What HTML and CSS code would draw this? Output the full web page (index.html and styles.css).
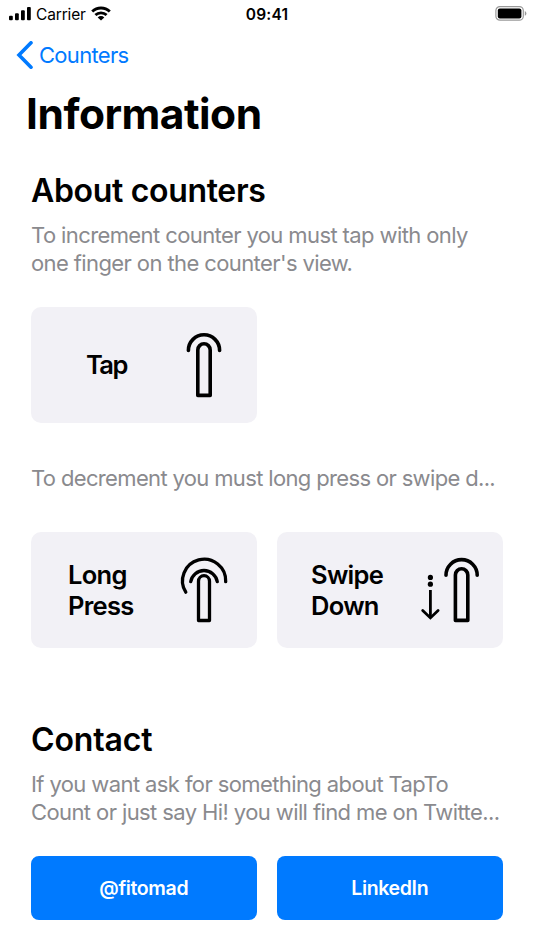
FILE: index.html
```html
<!DOCTYPE html>
<html lang="en">
<head>
    <meta charset="UTF-8">
    <meta name="viewport" content="width=device-width, initial-scale=1.0">
    <title>Information</title>
    <link rel="stylesheet" href="styles.css">
</head>
<body>

    <!-- Status bar -->
    <div class="status-bar">
        <div class="status-left">
            <svg class="signal" width="22" height="14" viewBox="0 0 22 14">
                <rect x="0" y="8.7" width="3.8" height="4.6" rx="1"/>
                <rect x="6" y="6.2" width="3.8" height="7.1" rx="1"/>
                <rect x="12" y="3.2" width="3.8" height="10.1" rx="1"/>
                <rect x="18" y="0" width="3.8" height="13.3" rx="1"/>
            </svg>
            <span class="carrier">Carrier</span>
            <svg class="wifi" width="20" height="15" viewBox="0 0 20 15" fill="none" stroke="#000" stroke-width="2.8">
                <path d="M1.2 5.6 A12.6 12.6 0 0 1 18.8 5.6"/>
                <path d="M4.4 9.1 A8 8 0 0 1 15.6 9.1"/>
                <path d="M10 14.6 L6.7 11.4 A4.6 4.6 0 0 1 13.3 11.4 Z" fill="#000" stroke="none"/>
            </svg>
        </div>
        <div class="time">09:41</div>
        <div class="status-right">
            <svg width="32" height="15" viewBox="0 0 32 15">
                <rect x="0.9" y="0.6" width="27.4" height="13.6" rx="4" fill="none" stroke="#999" stroke-width="1.2"/>
                <rect x="2.8" y="2.4" width="23.6" height="10" rx="2"/>
                <path d="M29.8 5 Q31.4 5.7 31.4 7.4 Q31.4 9.1 29.8 9.8 Z" fill="#999"/>
            </svg>
        </div>
    </div>

    <!-- Navigation -->
    <div class="nav">
        <svg width="17" height="28" viewBox="0 0 17 28" fill="none" stroke="#007aff" stroke-width="3.6">
            <path d="M15 1.8 L3 14 L15 26.2" stroke-linecap="round"/>
        </svg>
        <a class="back">Counters</a>
    </div>
    <h1>Information</h1>

    <div class="section">
        <h2 class="about-title">About counters</h2>
        <p class="text about-text">To increment counter you must tap with only<br>one finger on the counter's view.</p>
        <div class="cards">
            <div class="card">
                <div class="label label-tap">Tap</div>
                <svg class="icon" width="60" height="70" viewBox="0 0 60 70" fill="none" stroke="#000" stroke-linecap="round" stroke-linejoin="round">
                    <path d="M14.4 20.4 A15.6 15.6 0 0 1 45.6 20.4" stroke-width="3.6"/>
                    <path d="M23.8 65.4 V20 A6.2 6.2 0 0 1 36.2 20 V65.4 Z" stroke-width="3.6"/>
                </svg>
            </div>
        </div>

        <p class="text decrement-text">To decrement you must long press or swipe d...</p>
        <div class="cards">
            <div class="card">
                <div class="label label-long">Long<br>Press</div>
                <svg class="icon" width="60" height="70" viewBox="0 0 60 70" fill="none" stroke="#000" stroke-width="3.3" stroke-linecap="round" stroke-linejoin="round">
                    <path d="M11.8 37.2 A21.6 21.6 0 1 1 51.7 26.7"/>
                    <path d="M16.7 26.7 A13.5 13.5 0 0 1 43.3 26.7"/>
                    <path d="M24.5 65.5 V26.2 A5.5 5.5 0 0 1 35.5 26.2 V65.5 Z"/>
                </svg>
            </div>
            <div class="card">
                <div class="label label-swipe">Swipe<br>Down</div>
                <svg class="icon icon-swipe" width="66" height="70" viewBox="0 0 66 70" fill="none" stroke="#000" stroke-linecap="round" stroke-linejoin="round">
                    <circle cx="13.4" cy="22.4" r="2.6" fill="#000" stroke="none"/>
                    <circle cx="13.4" cy="29.2" r="2.6" fill="#000" stroke="none"/>
                    <path d="M13.4 35 V62.4" stroke-width="2.8" stroke-linecap="butt"/>
                    <path d="M5.7 55.4 L13.4 62.9 L21.1 55.4" stroke-width="2.8" stroke-linejoin="miter"/>
                    <path d="M29 20.2 A15.6 15.6 0 0 1 60.2 20.2" stroke-width="3.6"/>
                    <path d="M38.4 65.4 V20 A6.2 6.2 0 0 1 50.8 20 V65.4 Z" stroke-width="3.6"/>
                </svg>
            </div>
        </div>
    </div>

    <div class="section contact">
        <h2 class="contact-title">Contact</h2>
        <p class="text contact-text">If you want ask for something about TapTo<br>Count or just say Hi! you will find me on Twitte...</p>
        <div class="cards">
            <button class="btn">@fitomad</button>
            <button class="btn">LinkedIn</button>
        </div>
    </div>

</body>
</html>
```
FILE: styles.css
```css
body {
    font-family: Inter, "Liberation Sans", sans-serif;
    margin: 0;
    background-color: #fff;
    color: #000;
    height: 950px;
    overflow: hidden;
}
svg {
    display: block;
    flex: none;
}
.status-bar {
    display: grid;
    grid-template-columns: 1fr auto 1fr;
    align-items: center;
    height: 27px;
    padding: 0 7px 0 9px;
}
.status-left {
    display: flex;
    align-items: center;
}
.status-right {
    display: flex;
    justify-content: flex-end;
}
.carrier {
    font-size: 15.5px;
    letter-spacing: -0.15px;
    margin: 1px 5px 0 5px;
}
.time {
    font-size: 15.5px;
    font-weight: 600;
    letter-spacing: 0.2px;
    margin: 1px 2px 0 0;
}
.nav {
    display: flex;
    align-items: center;
    height: 55px;
    padding-left: 16px;
    gap: 6px;
}
.back {
    color: #007aff;
    font-size: 22px;
    letter-spacing: -0.7px;
}
h1 {
    margin: 0;
    padding-left: 26px;
    font-size: 42.5px;
    line-height: 64px;
    font-weight: 700;
    letter-spacing: -0.5px;
}
.section {
    padding: 25px 31px 0;
}
h2 {
    margin: 0;
    font-size: 32px;
    line-height: 40px;
    font-weight: 600;
    letter-spacing: -0.33px;
}
.contact-title {
    letter-spacing: -0.15px;
}
.text {
    margin: 9.75px 0 29.25px;
    font-size: 22px;
    line-height: 28.5px;
    letter-spacing: -0.6px;
    color: #8a8a8e;
    white-space: nowrap;
}
.decrement-text {
    margin: 41px 0 39.75px;
    letter-spacing: -0.65px;
}
.contact-text {
    letter-spacing: -0.6px;
}
.cards {
    display: grid;
    grid-template-columns: 225.5px 225.5px;
    gap: 20.5px;
}
.card {
    display: flex;
    align-items: center;
    justify-content: space-between;
    box-sizing: border-box;
    height: 115.75px;
    padding-right: 23px;
    border-radius: 10px;
    background-color: #f2f1f6;
}
.label {
    font-size: 25.5px;
    line-height: 31px;
    font-weight: 600;
    letter-spacing: -0.7px;
}
.label-tap {
    margin-left: 55px;
    letter-spacing: -1.6px;
}
.label-long {
    margin-left: 37px;
}
.label-swipe {
    margin-left: 34px;
}
.icon-swipe {
    margin-right: -3px;
}
.contact {
    padding-top: 72px;
}
.btn {
    height: 64.5px;
    border: none;
    border-radius: 8px;
    background-color: #007aff;
    color: #fff;
    font-family: inherit;
    font-size: 19.5px;
    font-weight: 600;
    letter-spacing: -0.35px;
    cursor: pointer;
}
```
